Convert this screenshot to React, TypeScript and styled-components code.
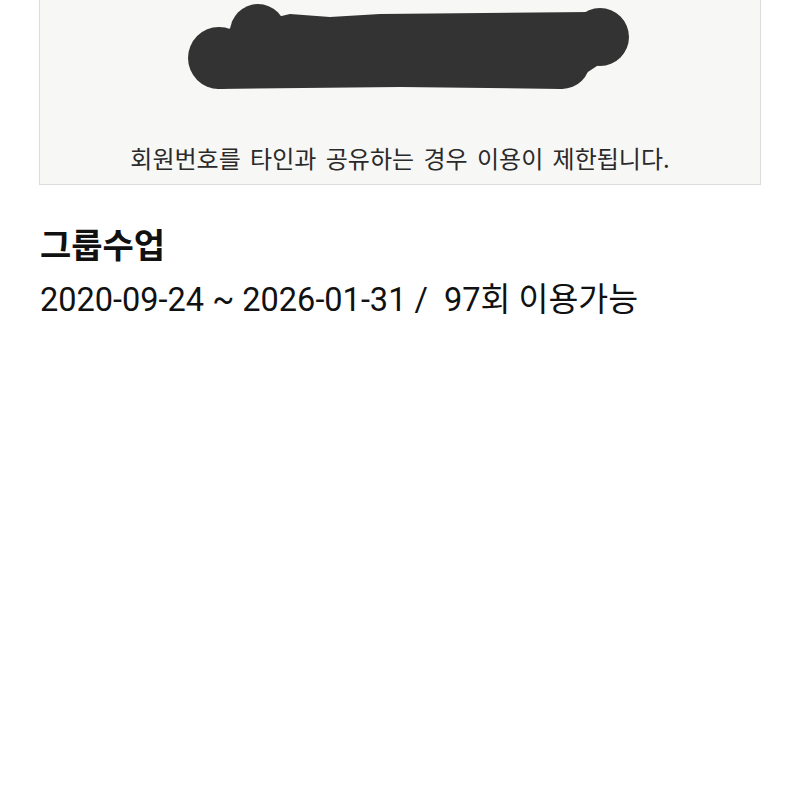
import React from "react";
import styled, { createGlobalStyle } from "styled-components";

const Global = createGlobalStyle`
  html, body { margin: 0; padding: 0; background: #ffffff; }
  body { font-family: "Noto Sans CJK KR", "Noto Sans", sans-serif; color: #1a1a1a; }
`;

const Page = styled.div`
  display: flex;
  flex-direction: column;
  padding: 0 39px;
`;

const Card = styled.div`
  display: flex;
  flex-direction: column;
  align-items: center;
  background: #f7f7f5;
  border: 1px solid #dcdcdc;
  border-top: none;
  padding-bottom: 14px;
`;

const Redaction = styled.svg`
  display: block;
  width: 720px;
  height: 100px;
`;

const Notice = styled.p`
  margin: 46px 0 0;
  font-family: "Noto Sans CJK KR", sans-serif;
  font-size: 24px;
  line-height: 1;
  word-spacing: 4px;
  color: #2a2a2a;
  white-space: nowrap;
`;

const Title = styled.h2`
  margin: 42px 0 0 1px;
  font-family: "Noto Sans CJK KR", sans-serif;
  font-weight: 700;
  font-size: 34px;
  line-height: 1;
  color: #111;
`;

const Period = styled.p`
  margin: 23px 0 0 1px;
  font-family: Roboto, "Noto Sans CJK KR", sans-serif;
  font-size: 32.5px;
  line-height: 1;
  color: #111;
  white-space: pre;
`;

export default function App() {
  return (
    <>
      <Global />
      <Page>
        <Card>
          <Redaction viewBox="40 0 720 100" aria-hidden="true">
            <g fill="#333333">
              <circle cx="219" cy="58" r="31" />
              <circle cx="258" cy="32" r="28" />
              <circle cx="600" cy="37" r="29" />
              <circle cx="562" cy="61" r="28" />
              <path d="M217 50 L230 28 L290 14 L330 17 L380 14 L590 12 L600 64 L562 89 L400 87 L217 89 Z" />
            </g>
          </Redaction>
          <Notice>회원번호를 타인과 공유하는 경우 이용이 제한됩니다.</Notice>
        </Card>
        <Title>그룹수업</Title>
        <Period>{"2020-09-24 ~ 2026-01-31 /  97회 이용가능"}</Period>
      </Page>
    </>
  );
}
